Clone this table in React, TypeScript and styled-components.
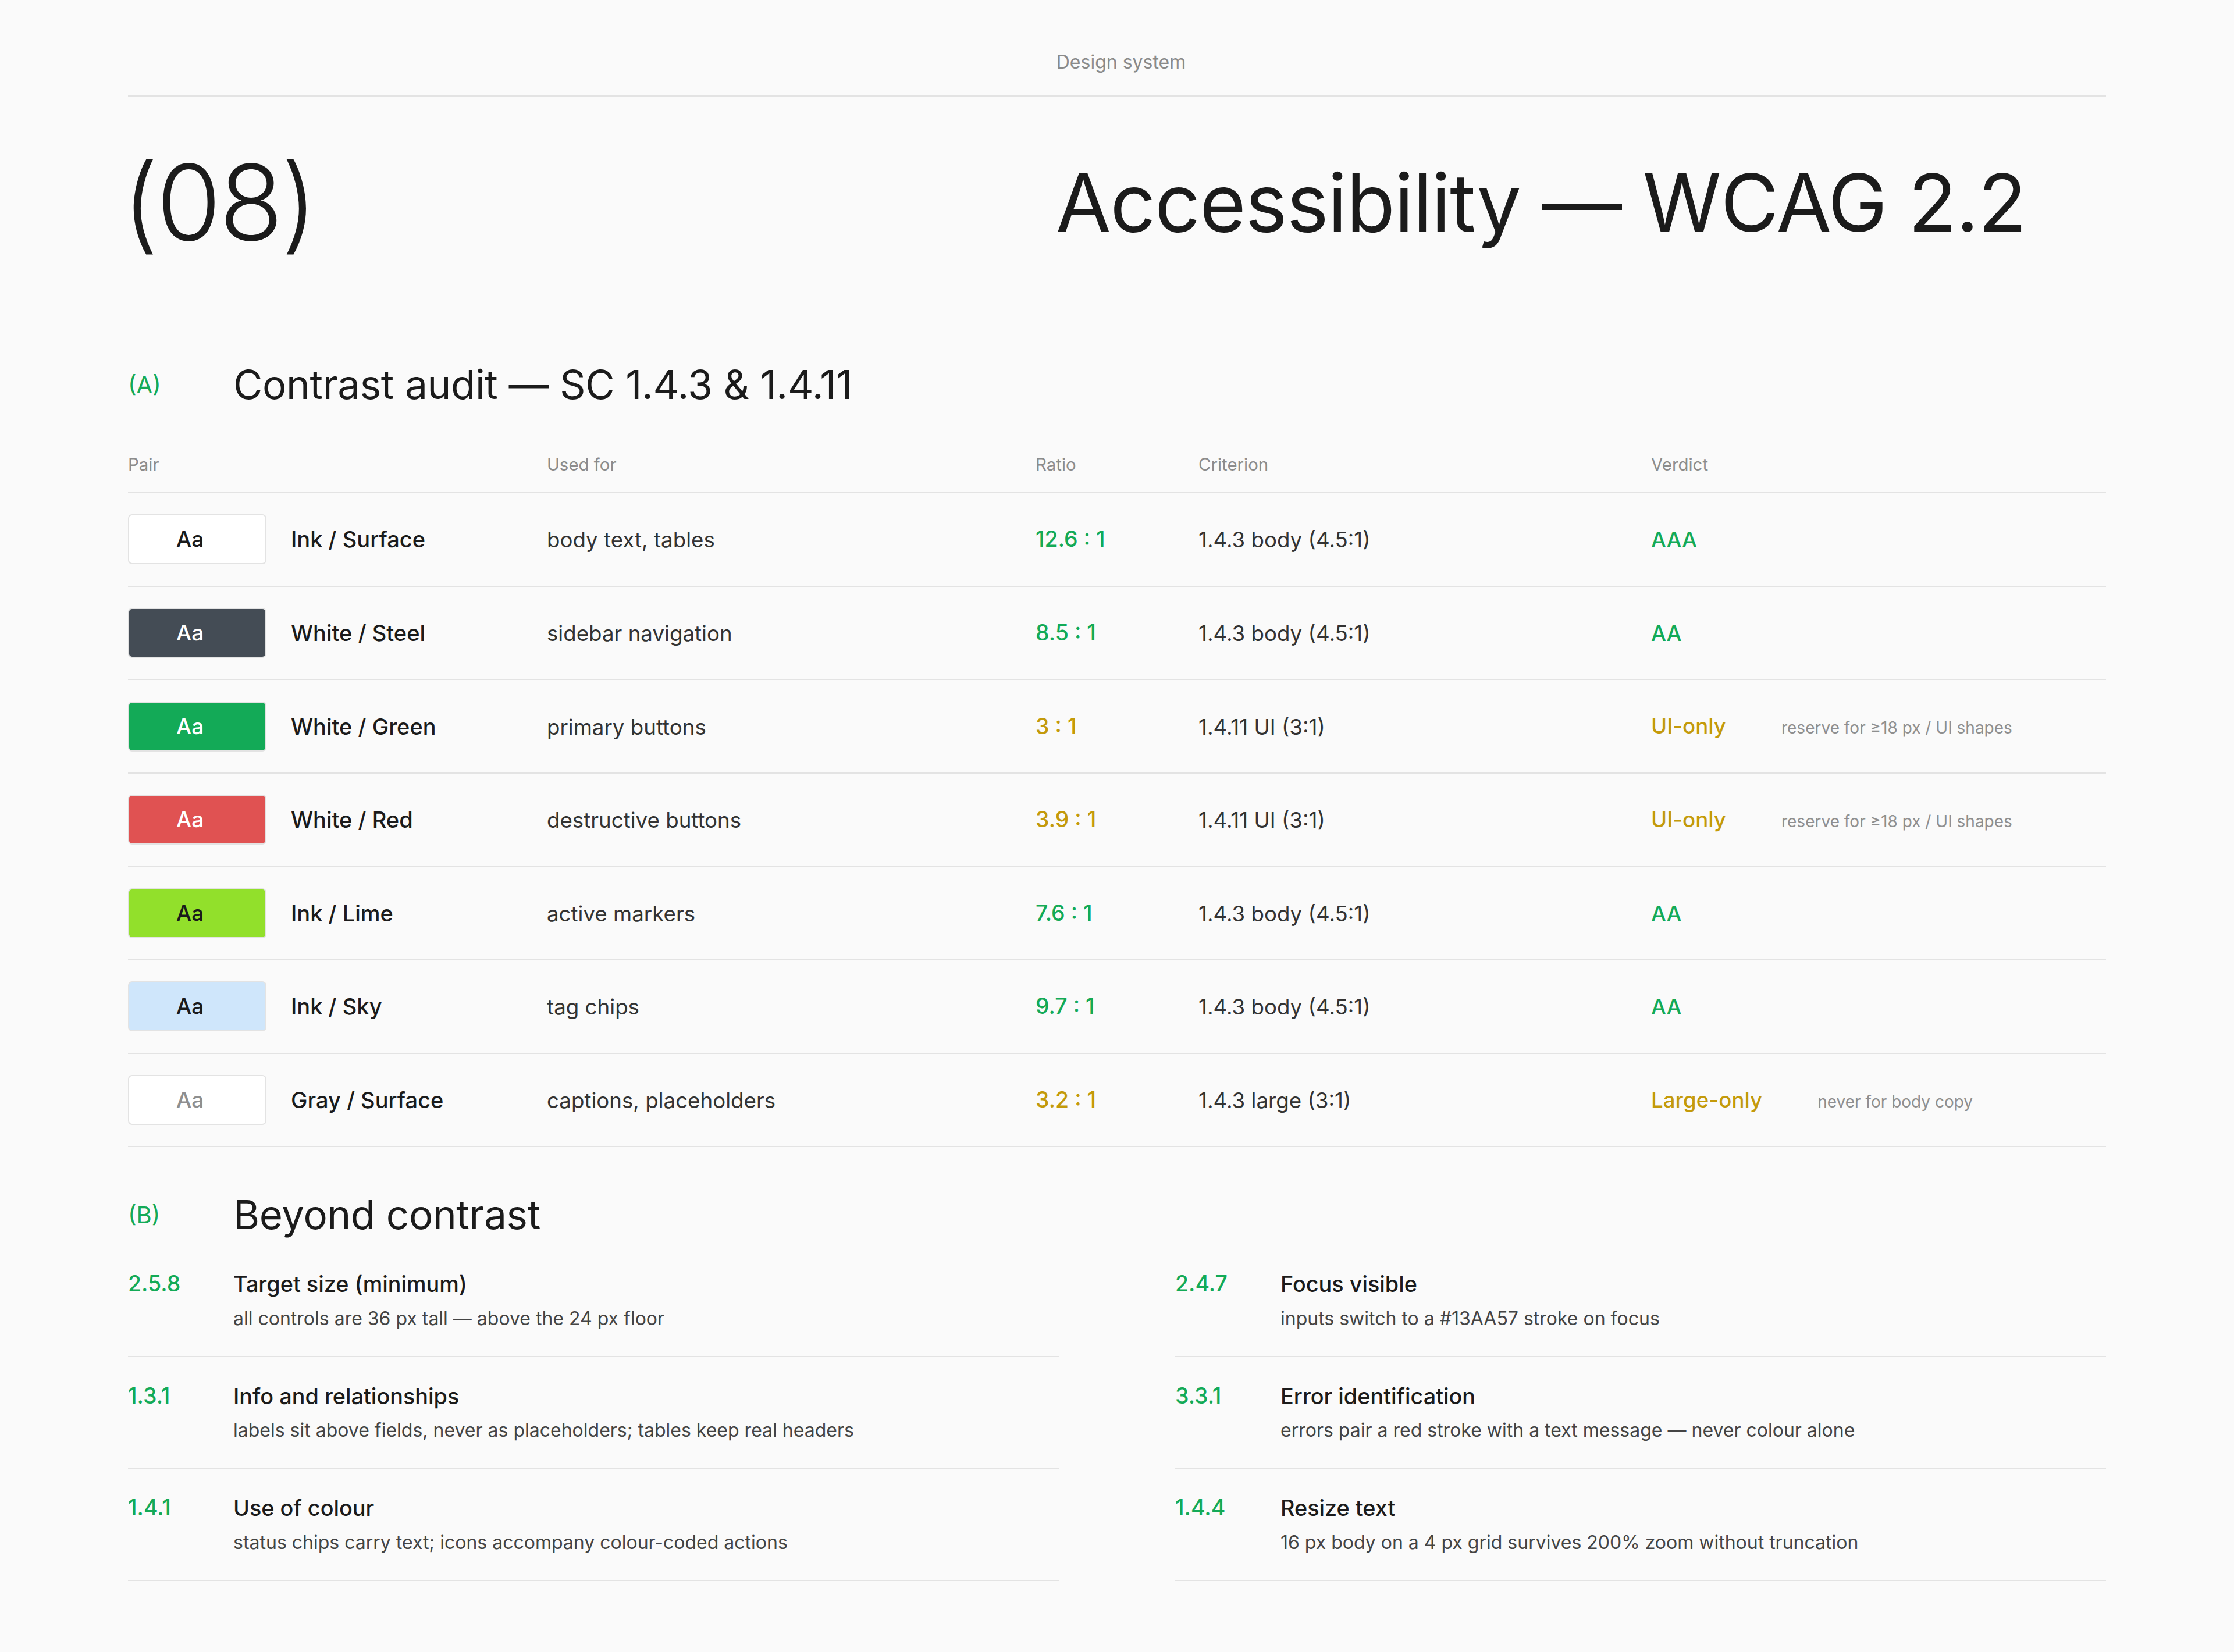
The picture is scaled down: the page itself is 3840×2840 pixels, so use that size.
import React from "react";
import styled, { createGlobalStyle } from "styled-components";

const GREEN = "#13AA57";
const AMBER = "#C49A0A";
const LINE = "#e3e3e3";

const Global = createGlobalStyle`
  html, body { margin: 0; padding: 0; background: #fafafa; }
  body {
    font-family: Inter, "Noto Sans", "Liberation Sans", sans-serif;
    color: #1b1b1b;
    -webkit-font-smoothing: antialiased;
  }
  * { box-sizing: border-box; }
`;

const Page = styled.main`
  padding: 0 220px 125px;
  min-height: 2840px;
`;

const TopBar = styled.header`
  padding: 88px 0 38px 14px;
  border-bottom: 2px solid ${LINE};
  text-align: center;
  font-size: 32px;
  line-height: 1.2;
  color: #8a8a8a;
`;

const Hero = styled.section`
  display: grid;
  grid-template-columns: 1595px 1fr;
  align-items: center;
  margin-top: 92px;
`;

const Numeral = styled.div`
  margin-left: -10px;
  font-size: 180px;
  line-height: 1;
  font-weight: 300;
  letter-spacing: -0.02em;
`;

const Title = styled.h1`
  margin: 0;
  font-size: 137px;
  line-height: 1;
  font-weight: 400;
  letter-spacing: -0.01em;
`;

const SectionHead = styled.div<{ $mt: number }>`
  display: grid;
  grid-template-columns: 181px 1fr;
  align-items: center;
  margin-top: ${(p) => p.$mt}px;
`;

const SectionTag = styled.span`
  color: ${GREEN};
  font-size: 40px;
  line-height: 1.2;
`;

const SectionTitle = styled.h2`
  margin: 0;
  font-size: 69px;
  line-height: 1.2;
  font-weight: 400;
  letter-spacing: -0.005em;
`;

const COLS = "720px 840px 280px 778px 1fr";

const HeadRow = styled.div`
  display: grid;
  grid-template-columns: ${COLS};
  margin-top: 78px;
  padding-bottom: 29px;
  border-bottom: 2px solid ${LINE};
  font-size: 29.4px;
  line-height: 36px;
  color: #8c8c8c;
`;

const Row = styled.div`
  display: grid;
  grid-template-columns: ${COLS};
  align-items: center;
  padding: 36.3px 0;
  border-bottom: 2px solid ${LINE};
  font-size: 36.7px;
  line-height: 50px;
`;

const PairCell = styled.div`
  display: flex;
  align-items: center;
  gap: 42px;
`;

const Swatch = styled.div<{ $bg: string; $fg: string }>`
  width: 238px;
  height: 86px;
  padding-left: 81px;
  border-radius: 7px;
  border: 2px solid ${LINE};
  background: ${(p) => p.$bg};
  color: ${(p) => p.$fg};
  display: flex;
  align-items: center;
  font-size: 37px;
  font-weight: 500;
`;

const PairName = styled.span`
  font-size: 38px;
  font-weight: 500;
  color: #1b1b1b;
`;

const Plain = styled.span`
  color: #333;
  padding-top: 2px;
`;

const Ratio = styled.span<{ $c: string }>`
  color: ${(p) => p.$c};
  font-size: 37.5px;
  font-weight: 500;
`;

const VerdictCell = styled.div`
  display: flex;
  align-items: baseline;
  gap: 95px;
  padding-top: 2px;
`;

const Verdict = styled.span<{ $c: string }>`
  color: ${(p) => p.$c};
  font-weight: 500;
`;

const Note = styled.span`
  font-size: 28px;
  color: #8f8f8f;
`;

const Beyond = styled.div`
  display: grid;
  grid-template-columns: 1fr 1fr;
  column-gap: 200px;
  margin-top: 10px;
`;

const Item = styled.div`
  display: grid;
  grid-template-columns: 181px 1fr;
  padding: 42px 0 41px;
  border-bottom: 2px solid ${LINE};
`;

const ItemNum = styled.span`
  color: ${GREEN};
  font-size: 37.5px;
  font-weight: 500;
  line-height: 50.7px;
`;

const ItemTitle = styled.div`
  font-size: 37.8px;
  font-weight: 500;
  line-height: 50.7px;
`;

const ItemDesc = styled.div`
  margin-top: 12px;
  font-size: 32px;
  line-height: 1.4;
  color: #444;
`;

type Pair = {
  bg: string;
  fg: string;
  name: string;
  use: string;
  ratio: string;
  crit: string;
  verdict: string;
  note?: string;
  pass: boolean;
};

const pairs: Pair[] = [
  { bg: "#ffffff", fg: "#1b1b1b", name: "Ink / Surface", use: "body text, tables", ratio: "12.6 : 1", crit: "1.4.3 body (4.5:1)", verdict: "AAA", pass: true },
  { bg: "#444c55", fg: "#ffffff", name: "White / Steel", use: "sidebar navigation", ratio: "8.5 : 1", crit: "1.4.3 body (4.5:1)", verdict: "AA", pass: true },
  { bg: GREEN, fg: "#ffffff", name: "White / Green", use: "primary buttons", ratio: "3 : 1", crit: "1.4.11 UI (3:1)", verdict: "UI-only", note: "reserve for ≥18 px / UI shapes", pass: false },
  { bg: "#e05252", fg: "#ffffff", name: "White / Red", use: "destructive buttons", ratio: "3.9 : 1", crit: "1.4.11 UI (3:1)", verdict: "UI-only", note: "reserve for ≥18 px / UI shapes", pass: false },
  { bg: "#92e02b", fg: "#1b1b1b", name: "Ink / Lime", use: "active markers", ratio: "7.6 : 1", crit: "1.4.3 body (4.5:1)", verdict: "AA", pass: true },
  { bg: "#cfe6fb", fg: "#1b1b1b", name: "Ink / Sky", use: "tag chips", ratio: "9.7 : 1", crit: "1.4.3 body (4.5:1)", verdict: "AA", pass: true },
  { bg: "#ffffff", fg: "#8f8f8f", name: "Gray / Surface", use: "captions, placeholders", ratio: "3.2 : 1", crit: "1.4.3 large (3:1)", verdict: "Large-only", note: "never for body copy", pass: false },
];

const criteria = [
  { n: "2.5.8", t: "Target size (minimum)", d: "all controls are 36 px tall — above the 24 px floor" },
  { n: "2.4.7", t: "Focus visible", d: "inputs switch to a #13AA57 stroke on focus" },
  { n: "1.3.1", t: "Info and relationships", d: "labels sit above fields, never as placeholders; tables keep real headers" },
  { n: "3.3.1", t: "Error identification", d: "errors pair a red stroke with a text message — never colour alone" },
  { n: "1.4.1", t: "Use of colour", d: "status chips carry text; icons accompany colour-coded actions" },
  { n: "1.4.4", t: "Resize text", d: "16 px body on a 4 px grid survives 200% zoom without truncation" },
];

export default function App() {
  return (
    <>
      <Global />
      <Page>
        <TopBar>Design system</TopBar>
        <Hero>
          <Numeral>(08)</Numeral>
          <Title>Accessibility — WCAG 2.2</Title>
        </Hero>

        <SectionHead $mt={182}>
          <SectionTag>(A)</SectionTag>
          <SectionTitle>Contrast audit — SC 1.4.3 &amp; 1.4.11</SectionTitle>
        </SectionHead>

        <HeadRow>
          <span>Pair</span>
          <span>Used for</span>
          <span>Ratio</span>
          <span>Criterion</span>
          <span>Verdict</span>
        </HeadRow>
        {pairs.map((p) => {
          const c = p.pass ? GREEN : AMBER;
          return (
            <Row key={p.name}>
              <PairCell>
                <Swatch $bg={p.bg} $fg={p.fg}>Aa</Swatch>
                <PairName>{p.name}</PairName>
              </PairCell>
              <Plain>{p.use}</Plain>
              <Ratio $c={c}>{p.ratio}</Ratio>
              <Plain>{p.crit}</Plain>
              <VerdictCell>
                <Verdict $c={c}>{p.verdict}</Verdict>
                {p.note && <Note>{p.note}</Note>}
              </VerdictCell>
            </Row>
          );
        })}

        <SectionHead $mt={75}>
          <SectionTag>(B)</SectionTag>
          <SectionTitle>Beyond contrast</SectionTitle>
        </SectionHead>
        <Beyond>
          {criteria.map((c) => (
            <Item key={c.n}>
              <ItemNum>{c.n}</ItemNum>
              <div>
                <ItemTitle>{c.t}</ItemTitle>
                <ItemDesc>{c.d}</ItemDesc>
              </div>
            </Item>
          ))}
        </Beyond>
      </Page>
    </>
  );
}
